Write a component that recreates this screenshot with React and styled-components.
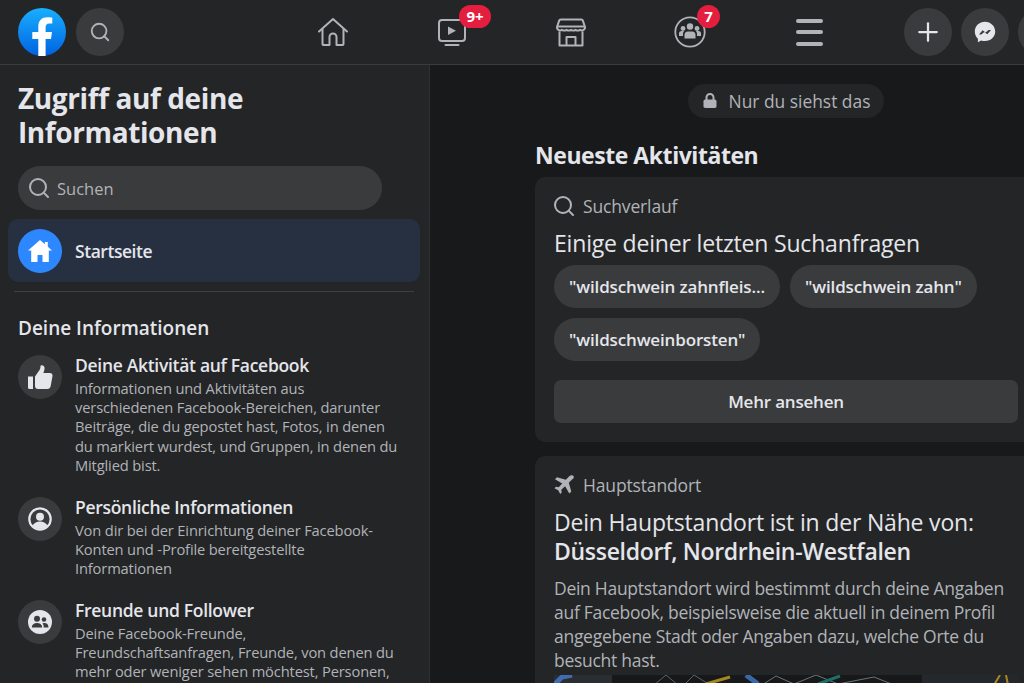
import React from 'react';
import styled, { createGlobalStyle } from 'styled-components';
import { Search, Plus } from 'lucide-react';

const GlobalStyle = createGlobalStyle`
    html, body {
        margin: 0;
        padding: 0;
        height: 100%;
        overflow: hidden;
        background: #18191a;
    }
    #root {
        height: 100%;
    }
    * {
        box-sizing: border-box;
    }
`;

const font = `"Open Sans", "Noto Sans", "Liberation Sans", sans-serif`;

const infoItems = [
    {
        key: 'activity',
        title: 'Deine Aktivität auf Facebook',
        text: 'Informationen und Aktivitäten aus verschiedenen Facebook-Bereichen, darunter Beiträge, die du gepostet hast, Fotos, in denen du markiert wurdest, und Gruppen, in denen du Mitglied bist.',
    },
    {
        key: 'person',
        title: 'Persönliche Informationen',
        text: 'Von dir bei der Einrichtung deiner Facebook-Konten und -Profile bereitgestellte Informationen',
    },
    {
        key: 'friends',
        title: 'Freunde und Follower',
        text: 'Deine Facebook-Freunde, Freundschaftsanfragen, Freunde, von denen du mehr oder weniger sehen möchtest, Personen,',
    },
];

function FbLogo() {
    return (
        <svg width="48" height="48" viewBox="0 0 48 48">
            <defs>
                <linearGradient id="fbg" x1="0" y1="0" x2="0" y2="1">
                    <stop offset="0" stopColor="#19afff" />
                    <stop offset="1" stopColor="#0062e0" />
                </linearGradient>
            </defs>
            <circle cx="24" cy="24" r="24" fill="url(#fbg)" />
            <path d="M20.3 48V31h-6v-7h6v-5.4c0-6 3.5-9.3 9-9.3 2.6 0 5 .4 5 .4v5.9h-2.9c-2.9 0-3.800 1.800-3.800 3.600V24h6.400l-1 7h-5.400v17z" fill="#fff" />
        </svg>
    );
}

function HomeIcon() {
    return (
        <svg width="32" height="30" viewBox="0 0 32 30" fill="none" stroke="#b0b3b8" strokeWidth="2" strokeLinejoin="round" strokeLinecap="round">
            <path d="M2 14.500 16 2l14 12.500" />
            <path d="M5.500 12v14.500a1.600 1.600 0 0 0 1.600 1.600h5.400V20a3.500 3.500 0 0 1 7 0v8.100h5.400a1.600 1.600 0 0 0 1.600-1.600V12" />
        </svg>
    );
}

function VideoIcon() {
    return (
        <svg width="30" height="30" viewBox="0 0 30 30" fill="none" stroke="#b0b3b8" strokeWidth="2" strokeLinecap="round">
            <rect x="2" y="3" width="26" height="21" rx="3" />
            <path d="M8.500 28h13" />
            <path d="M11 9.500v8.500l8-4.250z" fill="#b0b3b8" stroke="none" />
        </svg>
    );
}

function StoreIcon() {
    return (
        <svg width="30" height="30" viewBox="0 0 30 30" fill="none" stroke="#b0b3b8" strokeWidth="2" strokeLinejoin="round">
            <path d="M5 2.500h20a2 2 0 0 1 2 1.600L29 10v1a3.200 3.200 0 0 1-5 1.800 4 4 0 0 1-4.500 0 4 4 0 0 1-4.500 0 4 4 0 0 1-4.500 0 4 4 0 0 1-4.500 0 3.200 3.200 0 0 1-5-1.800v-1L3 4.100a2 2 0 0 1 2-1.600z" />
            <path d="M1.500 9.500h27" />
            <path d="M3.500 14.500V28.500h23V14.500" />
            <path d="M10.500 28.500V20h9v8.500" />
        </svg>
    );
}

function GroupsIcon() {
    return (
        <svg width="32" height="32" viewBox="0 0 32 32">
            <circle cx="16" cy="16" r="14.700" fill="none" stroke="#b0b3b8" strokeWidth="1.800" />
            <g fill="#b0b3b8">
                <circle cx="16" cy="10.500" r="3.200" />
                <circle cx="9" cy="12.500" r="2.400" />
                <circle cx="23" cy="12.500" r="2.400" />
                <path d="M10.500 22.500v-3.500a3.500 3.500 0 0 1 3.500-3.500h4a3.500 3.500 0 0 1 3.500 3.500v3.500z" />
                <path d="M5 20v-2.500a2.500 2.500 0 0 1 2.500-2.500h2.500a5 5 0 0 0-1 3v2z" />
                <path d="M27 20v-2.500a2.500 2.500 0 0 0-2.500-2.500H22a5 5 0 0 1 1 3v2z" />
            </g>
        </svg>
    );
}

function MessengerIcon() {
    return (
        <svg width="22" height="22" viewBox="0 0 22 22">
            <path d="M11 .8C5.200.8.800 5 .800 10.600c0 2.900 1.200 5.400 3.100 7.200v3.400l3.200-1.700c1.200.4 2.500.6 3.900.6 5.800 0 10.200-4.200 10.200-9.500S16.800.8 11 .8z" fill="#e4e6eb" />
            <path d="M5 13.500l3.600-4.300 3 2.200 3-2.400 2.400.1-3.700 4.200-3-2.200-3 2.400z" fill="#3a3b3c" />
        </svg>
    );
}

function HomeSolid() {
    return (
        <svg width="26" height="24" viewBox="0 0 26 24" fill="#fff">
            <path d="M13 1 1 11.500h3.200V23h6.300v-7h5v7h6.300V11.500H25l-4.200-3.700V3h-3v2.200z" />
        </svg>
    );
}

function ThumbIcon() {
    return (
        <svg width="26" height="26" viewBox="0 0 26 26" fill="#e4e6eb">
            <path d="M1 12.500h5V25H2.500A1.500 1.500 0 0 1 1 23.500z" />
            <path d="M8 12.500 12.500 6c.7-1 1-2.500 1-4 0-1.200 3.500-1.500 4 1.500.3 2-.6 4.300-1.200 5.500h6.500c2.200 0 3 1.500 2.700 3l-1.800 10c-.3 1.800-1.500 3-3.500 3H11c-1.800 0-3-1-3-3z" />
        </svg>
    );
}

function PersonCircle() {
    return (
        <svg width="24" height="24" viewBox="0 0 24 24">
            <circle cx="12" cy="12" r="10.700" fill="none" stroke="#e4e6eb" strokeWidth="2.200" />
            <circle cx="12" cy="9.800" r="4" fill="#e4e6eb" />
            <path d="M4.500 19c1-3 4-4.500 7.500-4.500s6.500 1.500 7.500 4.500c-2 2-4.500 3-7.500 3s-5.500-1-7.500-3z" fill="#e4e6eb" />
        </svg>
    );
}

function FriendsCircle() {
    return (
        <svg width="24" height="24" viewBox="0 0 24 24">
            <circle cx="12" cy="12" r="12" fill="#e4e6eb" />
            <circle cx="9" cy="8.800" r="3" fill="#3a3b3c" />
            <circle cx="16" cy="9.500" r="2.300" fill="#3a3b3c" />
            <path d="M3.800 17.500c0-3 2.200-4.500 5.200-4.500s5.200 1.500 5.200 4.500z" fill="#3a3b3c" />
            <path d="M15.500 13c2.800-.4 5 1 5 4.500h-4.800c0-1.800-.2-3.200-1.200-4z" fill="#3a3b3c" />
        </svg>
    );
}

function PlaneIcon() {
    return (
        <svg width="20" height="20" viewBox="0 0 20 20" fill="#b0b3b8">
            <path d="M19.300.7c-1-1-3-.5-4.300.8l-3.200 3.200L3 2.200 1 4.200l7.200 4.200-3.500 3.800-2.700-.4-1.500 1.500 3.700 2 2 3.700 1.500-1.500-.4-2.700 3.800-3.500 4.200 7.200 2-2-2.500-8.800 3.200-3.200C19.800 3.700 20.300 1.700 19.300.7z" />
        </svg>
    );
}

function LockIcon() {
    return (
        <svg width="14" height="16" viewBox="0 0 14 16" fill="none">
            <path d="M3.500 7V4.500a3.500 3.500 0 0 1 7 0V7" stroke="#b0b3b8" strokeWidth="2" />
            <rect x="0.500" y="6.500" width="13" height="8.500" rx="1.800" fill="#b0b3b8" />
        </svg>
    );
}

const itemIcons = {
    activity: <ThumbIcon />,
    person: <PersonCircle />,
    friends: <FriendsCircle />,
};

export default function App() {
    return (
        <>
            <GlobalStyle />
            <Page>
                <TopBar>
                    <LeftGroup>
                        <FbLogo />
                        <RoundButton><Search size={22} color="#b0b3b8" strokeWidth={2} /></RoundButton>
                    </LeftGroup>
                    <NavGroup>
                        <NavItem><HomeIcon /></NavItem>
                        <NavItem>
                            <VideoIcon />
                            <Badge $wide>9+</Badge>
                        </NavItem>
                        <NavItem><StoreIcon /></NavItem>
                        <NavItem>
                            <GroupsIcon />
                            <Badge>7</Badge>
                        </NavItem>
                        <NavItem>
                            <Burger><span /><span /><span /></Burger>
                        </NavItem>
                    </NavGroup>
                    <RightGroup>
                        <RoundButton><Plus size={30} color="#e4e6eb" strokeWidth={1.8} /></RoundButton>
                        <RoundButton><MessengerIcon /></RoundButton>
                        <RoundButton />
                    </RightGroup>
                </TopBar>

                <Content>
                    <Sidebar>
                        <Title>Zugriff auf deine Informationen</Title>
                        <SearchField>
                            <Search size={24} color="#b0b3b8" strokeWidth={2} />
                            <span>Suchen</span>
                        </SearchField>
                        <ActiveRow>
                            <HomeDisc><HomeSolid /></HomeDisc>
                            <span>Startseite</span>
                        </ActiveRow>
                        <Divider />
                        <SectionTitle>Deine Informationen</SectionTitle>
                        {infoItems.map((item) => (
                            <InfoRow key={item.key}>
                                <InfoDisc>{itemIcons[item.key]}</InfoDisc>
                                <div>
                                    <InfoTitle>{item.title}</InfoTitle>
                                    <InfoText>{item.text}</InfoText>
                                </div>
                            </InfoRow>
                        ))}
                    </Sidebar>

                    <Main>
                        <PrivacyWrap>
                            <PrivacyPill>
                                <LockIcon />
                                <span>Nur du siehst das</span>
                            </PrivacyPill>
                        </PrivacyWrap>
                        <MainTitle>Neueste Aktivitäten</MainTitle>

                        <Card>
                            <CardHead>
                                <HeadIcon><Search size={24} color="#b0b3b8" strokeWidth={2} /></HeadIcon>
                                <span>Suchverlauf</span>
                            </CardHead>
                            <CardHeading>Einige deiner letzten Suchanfragen</CardHeading>
                            <Chips>
                                <Chip>"wildschwein zahnfleis...</Chip>
                                <Chip>"wildschwein zahn"</Chip>
                                <Chip>"wildschweinborsten"</Chip>
                            </Chips>
                            <MoreButton>Mehr ansehen</MoreButton>
                        </Card>

                        <Card>
                            <CardHead>
                                <HeadIcon><PlaneIcon /></HeadIcon>
                                <span>Hauptstandort</span>
                            </CardHead>
                            <CardHeading>
                                Dein Hauptstandort ist in der Nähe von:
                                <br />
                                <b>Düsseldorf, Nordrhein-Westfalen</b>
                            </CardHeading>
                            <CardText>
                                Dein Hauptstandort wird bestimmt durch deine Angaben auf Facebook, beispielsweise die aktuell in deinem Profil angegebene Stadt oder Angaben dazu, welche Orte du besucht hast.
                            </CardText>
                            <MapStrip>
                                <svg width="464" height="40" viewBox="0 0 464 40" fill="none">
                                    <rect x="0" y="0" width="58" height="40" fill="#2a2d31" />
                                    <rect x="368" y="0" width="96" height="40" fill="#24282c" />
                                    <path d="M0 10 8 2 18 0" stroke="#3f6db0" strokeWidth="5" />
                                    <path d="M100 10 112 0 124 10M130 10 140 0 156 10" stroke="#5d6468" />
                                    <path d="M152 9 176 2" stroke="#a8861f" strokeWidth="3" />
                                    <path d="M192 0 204 9" stroke="#3a67a8" strokeWidth="5" />
                                    <path d="M208 10 222 1 240 9 262 0 284 9 320 2 340 10" stroke="#6b757b" />
                                    <path d="M264 9 286 1" stroke="#1f6f69" strokeWidth="3" />
                                    <path d="M440 10 446 0M452 0 454 10" stroke="#a8861f" strokeWidth="2" />
                                </svg>
                            </MapStrip>
                        </Card>
                    </Main>
                </Content>
            </Page>
        </>
    );
}

const Page = styled.div`
    width: 1024px;
    height: 683px;
    overflow: hidden;
    display: flex;
    flex-direction: column;
    font-family: ${font};
    background: #18191a;
    color: #e4e6eb;
`;

const TopBar = styled.div`
    height: 65px;
    flex-shrink: 0;
    background: #242526;
    border-bottom: 1px solid #3a3b3c;
    display: flex;
    align-items: flex-start;
    padding-top: 8px;
    padding-left: 18px;
`;

const LeftGroup = styled.div`
    display: flex;
    flex-shrink: 0;
    gap: 10px;
    width: 255.500px;
`;

const RoundButton = styled.div`
    width: 48px;
    height: 48px;
    flex-shrink: 0;
    border-radius: 50%;
    background: #3a3b3c;
    display: flex;
    align-items: center;
    justify-content: center;
`;

const NavGroup = styled.div`
    display: flex;
    flex-shrink: 0;
    width: 595px;
    height: 48px;
`;

const NavItem = styled.div`
    position: relative;
    width: 119px;
    height: 48px;
    display: flex;
    align-items: center;
    justify-content: center;
`;

const Badge = styled.span`
    position: absolute;
    top: -3px;
    left: 66.500px;
    min-width: 23px;
    height: 23px;
    padding: 0 ${(p) => (p.$wide ? '7.500px' : '0')};
    border-radius: 12px;
    background: #e41e3f;
    color: #fff;
    font-size: 15px;
    font-weight: 700;
    line-height: 23px;
    text-align: center;
`;

const Burger = styled.div`
    display: flex;
    flex-direction: column;
    gap: 7.500px;

    span {
        display: block;
        width: 27px;
        height: 4px;
        border-radius: 2px;
        background: #b0b3b8;
    }
`;

const RightGroup = styled.div`
    display: flex;
    flex-shrink: 0;
    gap: 9px;
    margin-left: 35.500px;
`;

const Content = styled.div`
    flex: 1;
    display: flex;
    min-height: 0;
`;

const Sidebar = styled.div`
    width: 430px;
    flex-shrink: 0;
    background: #242526;
    border-right: 1px solid #2f3031;
    padding: 17px 9px 0 8px;
    overflow: hidden;
`;

const Title = styled.h1`
    margin: 0 10px 17px;
    width: 300px;
    font-size: 28px;
    line-height: 33.500px;
    font-weight: 700;
    letter-spacing: -0.4px;
    color: #e4e6eb;
`;

const SearchField = styled.div`
    width: 364px;
    height: 44px;
    margin-left: 10px;
    border-radius: 22px;
    background: #3a3b3c;
    display: flex;
    align-items: center;
    gap: 6px;
    padding-left: 9px;
    font-size: 16.500px;
    color: #b0b3b8;
`;

const ActiveRow = styled.div`
    margin-top: 9px;
    height: 63px;
    border-radius: 10px;
    background: #263040;
    display: flex;
    align-items: center;
    gap: 13px;
    padding-left: 10px;
    font-size: 17.500px;
    font-weight: 600;
    letter-spacing: -0.45px;
`;

const HomeDisc = styled.div`
    width: 44px;
    height: 44px;
    border-radius: 50%;
    background: #2d88ff;
    display: flex;
    align-items: center;
    justify-content: center;
`;

const Divider = styled.div`
    margin: 9px 6px 0;
    height: 1px;
    background: #3e4042;
`;

const SectionTitle = styled.h2`
    margin: 24px 10px 15px;
    font-size: 19px;
    line-height: 24px;
    font-weight: 600;
`;

const InfoRow = styled.div`
    display: flex;
    gap: 13px;
    padding: 0 10px;
    margin-bottom: 21.500px;
`;

const InfoDisc = styled.div`
    width: 44px;
    height: 44px;
    flex-shrink: 0;
    border-radius: 50%;
    background: #3a3b3c;
    display: flex;
    align-items: center;
    justify-content: center;
`;

const InfoTitle = styled.div`
    font-size: 17.500px;
    line-height: 21px;
    font-weight: 600;
    letter-spacing: -0.3px;
`;

const InfoText = styled.div`
    margin-top: 3px;
    width: 328px;
    font-size: 14.700px;
    line-height: 19.200px;
    letter-spacing: -0.15px;
    color: #b0b3b8;
`;

const Main = styled.div`
    flex: 1;
    padding: 19px 0 0 105px;
    overflow: hidden;
`;

const PrivacyWrap = styled.div`
    width: 502px;
    display: flex;
    justify-content: center;
`;

const PrivacyPill = styled.div`
    height: 34px;
    border-radius: 17px;
    background: #242526;
    display: inline-flex;
    align-items: center;
    gap: 12px;
    padding: 0 14px 0 15px;
    font-size: 17.400px;
    color: #b0b3b8;
`;

const MainTitle = styled.h2`
    margin: 22px 0 7px 0;
    font-size: 23px;
    line-height: 30px;
    font-weight: 700;
    letter-spacing: -0.45px;
`;

const Card = styled.div`
    width: 502px;
    background: #242526;
    border-radius: 10px;
    padding: 16px 19px 19px;
    margin-bottom: 14px;
`;

const CardHead = styled.div`
    height: 26px;
    display: flex;
    align-items: center;
    gap: 9px;
    font-size: 17.500px;
    letter-spacing: -0.15px;
    color: #b0b3b8;
`;

const HeadIcon = styled.span`
    width: 20px;
    height: 20px;
    display: flex;
    align-items: center;
    justify-content: center;

    svg {
        flex-shrink: 0;
    }
`;

const CardHeading = styled.div`
    margin-top: 10px;
    font-size: 23px;
    line-height: 29px;
    letter-spacing: -0.18px;
    color: #e4e6eb;

    b {
        font-weight: 600;
        letter-spacing: -0.3px;
    }
`;

const Chips = styled.div`
    margin-top: 7px;
    display: flex;
    flex-wrap: wrap;
    gap: 10px;
`;

const Chip = styled.div`
    height: 43px;
    border-radius: 22px;
    background: #3a3b3c;
    padding: 0 15px;
    display: flex;
    align-items: center;
    font-size: 17px;
    font-weight: 600;
    letter-spacing: -0.15px;
`;

const MoreButton = styled.div`
    margin-top: 19px;
    width: 464px;
    height: 43px;
    border-radius: 7px;
    background: #3a3b3c;
    display: flex;
    align-items: center;
    justify-content: center;
    font-size: 17px;
    font-weight: 600;
    letter-spacing: -0.2px;
`;

const CardText = styled.div`
    margin-top: 10px;
    width: 464px;
    font-size: 17.500px;
    line-height: 24px;
    letter-spacing: -0.28px;
    color: #b0b3b8;
`;

const MapStrip = styled.div`
    margin-top: 3px;
    width: 464px;
    height: 40px;
    background: #17181a;
    overflow: hidden;
`;
